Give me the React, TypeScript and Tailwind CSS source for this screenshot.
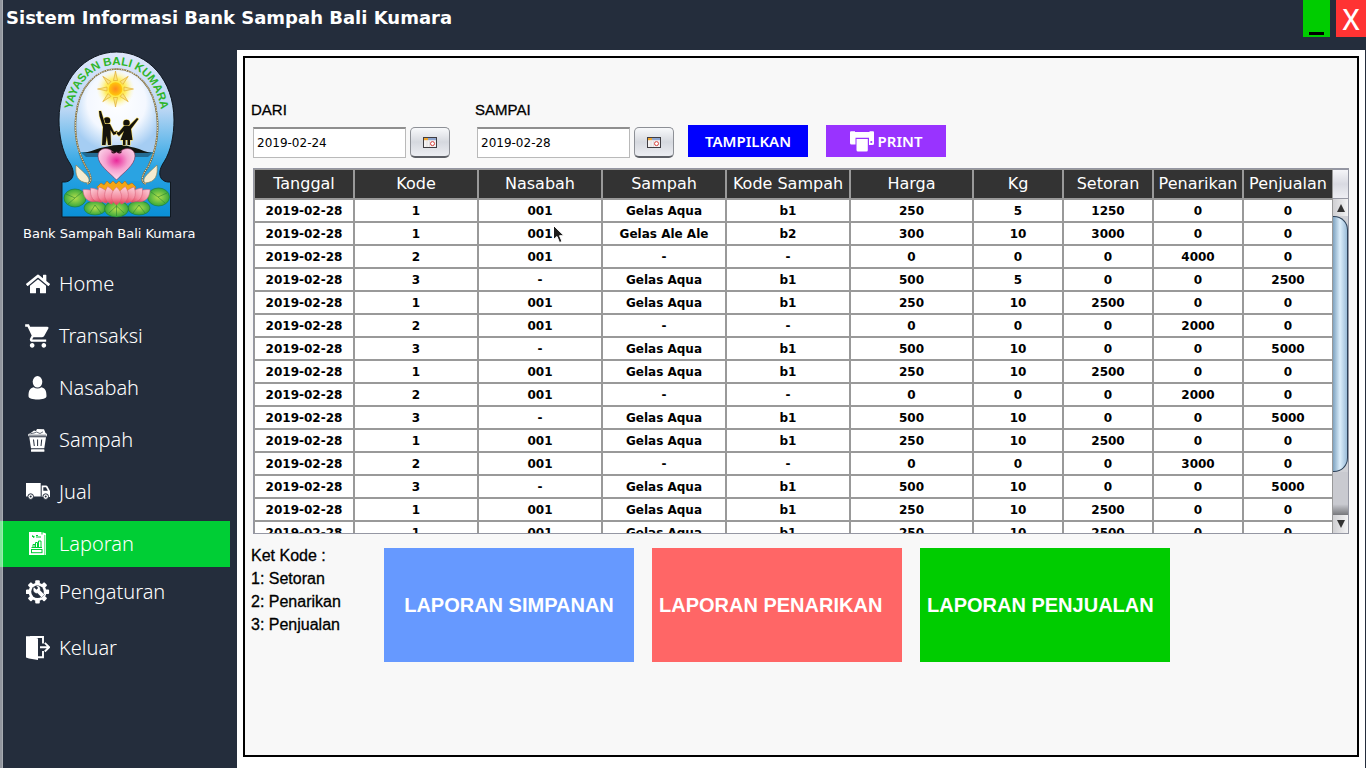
import type { ReactNode } from "react";
import { FaHome } from "react-icons/fa";
import { MdShoppingCart } from "react-icons/md";

const NAVY = "#242d3c";

function Logo() {
  const petals = [-64, -48, -32, -16, 64, 48, 32, 16, 0];
  return (
    <svg viewBox="17 5 120 170" className="h-[170px] w-[120px]" role="img" aria-label="Yayasan Bali Kumara">
      <defs>
        <linearGradient id="sky" x1="0" y1="0" x2="0" y2="1">
          <stop offset="0" stopColor="#dfe6fa" />
          <stop offset="0.35" stopColor="#b9d6f4" />
          <stop offset="0.7" stopColor="#2ba5e4" />
          <stop offset="1" stopColor="#0a8fd6" />
        </linearGradient>
        <radialGradient id="glow" cx="0.5" cy="0.4" r="0.6">
          <stop offset="0" stopColor="#ffffff" />
          <stop offset="0.6" stopColor="#f4f8ff" />
          <stop offset="1" stopColor="#a5cdf3" />
        </radialGradient>
        <radialGradient id="halo">
          <stop offset="0" stopColor="#ffd200" />
          <stop offset="0.55" stopColor="#ffee66" />
          <stop offset="1" stopColor="#fff8c0" stopOpacity="0" />
        </radialGradient>
        <radialGradient id="sun">
          <stop offset="0" stopColor="#ff8a1e" />
          <stop offset="1" stopColor="#ffc70a" />
        </radialGradient>
        <radialGradient id="heart" cx="0.5" cy="0.38" r="0.6">
          <stop offset="0" stopColor="#e9289a" />
          <stop offset="0.5" stopColor="#f6a0cf" />
          <stop offset="1" stopColor="#fbdcec" />
        </radialGradient>
        <linearGradient id="petal" x1="0" y1="0" x2="0" y2="1">
          <stop offset="0" stopColor="#fbd3dc" />
          <stop offset="0.6" stopColor="#f48a9e" />
          <stop offset="1" stopColor="#e23f55" />
        </linearGradient>
        <radialGradient id="leaf">
          <stop offset="0" stopColor="#b6e04c" />
          <stop offset="1" stopColor="#38a83c" />
        </radialGradient>
        <path id="arc" d="M31 74 C33 43 50 20 76.500 20 C103 20 120 43 122 74" />
      </defs>
      <path
        d="M22 172 V137 H25 C34 136 36 127 29 117 C22 106 19 90 19 75 C19 35 45 7 76.500 7 C108 7 134 35 134 75 C134 90 131 106 124 117 C117 127 119 136 128 137 H130.500 V172Z"
        fill="url(#sky)"
        stroke="#101820"
        strokeWidth="1"
      />
      <path d="M38 107 C30 65 45 24 76.500 24 C108 24 123 65 115 107Z" fill="url(#glow)" />
      <path d="M38 107 H115 C112 120 106 130 103 136 H50 C46 128 41 119 38 107Z" fill="#2aa3e2" />
      <path
        d="M47 139 C54 137 50 128 46 122 C37 106 34 88 36 70 C39 42 56 24 76.500 24 C97 24 114 42 117 70 C119 88 116 106 108 122 C103 128 99 137 106 139"
        fill="none"
        stroke="#75643f"
        strokeWidth="1.700"
      />
      <path
        d="M47 139 C54 137 50 128 46 122 C37 106 34 88 36 70 C39 42 56 24 76.500 24 C97 24 114 42 117 70 C119 88 116 106 108 122 C103 128 99 137 106 139"
        fill="none"
        stroke="#e8dcae"
        strokeWidth="1"
        strokeDasharray="1.500 1"
      />
      <text fontFamily="Liberation Sans, sans-serif" fontSize="11.500" fontWeight="700" fill="#2fb52a">
        <textPath href="#arc" startOffset="50%" textAnchor="middle">
          YAYASAN BALI KUMARA
        </textPath>
      </text>
      <circle cx="75.500" cy="44" r="19" fill="url(#halo)" />
      {[0, 45, 90, 135, 180, 225, 270, 315].map((a) => (
        <path key={a} d="M73.500 35.500 L75.500 26 L77.500 35.500Z" fill="#fbe27a" stroke="#d79a17" strokeWidth="0.500" transform={`rotate(${a} 75.500 44)`} />
      ))}
      <circle cx="75.500" cy="44" r="6.800" fill="url(#sun)" />
      <path d="M42 108 C52 107 56 103 68 101.500 C76 99.500 84 99.500 91 102 C99 103 104 107 112 108Z" fill="#10150f" />
      <path d="M41 107.500 H113 L108 112 H46Z" fill="#1b3344" opacity="0.500" />
      <g stroke="#f6dd6a" strokeWidth="1.200" fill="#15130c" strokeLinejoin="round" paintOrder="stroke">
        <circle cx="67" cy="75.500" r="3.200" />
        <path d="M59 66 L61 66 L65 79 H70 L74 87 L77 86 L78 88 L73.500 90 L70.500 85 L71 100 H68 L66.800 91 L65.500 100 H62 L63 82 L59.500 71Z" />
        <circle cx="86.500" cy="78" r="3.200" />
        <path d="M84 81 H89 L97 73 L98.500 74 L91 84 L92.500 95 H90 V100 H87.500 V95 H85.500 V100 H83 V95 H80.500 L84 86 L79 91 L77 89 L76.500 87.500 L79 87Z" />
      </g>
      <path
        d="M76.500 135 C70 128 58 120 58 111 C58 104 66 101 72 106 Q75 109 76.500 107 Q78 109 81 106 C87 101 95 104 95 111 C95 120 83 128 76.500 135Z"
        fill="url(#heart)"
        stroke="#7b2850"
        strokeWidth="0.600"
      />
      <path d="M71.500 106.500 Q73 109 75.500 107 M81.500 106.500 Q80 109 77.500 107" fill="none" stroke="#30101c" strokeWidth="1.200" />
      <g fill="#f5ecd0" stroke="#8f7a46" strokeWidth="0.600">
        <path d="M36 120 C35 130 37 137 48 138 C52 133 44 128 36 120Z" />
        <path d="M117 120 C118 130 116 137 105 138 C101 133 109 128 117 120Z" />
      </g>
      <g fill="url(#leaf)" stroke="#1f7a2b" strokeWidth="0.600">
        <ellipse cx="35" cy="153" rx="11" ry="9" />
        <ellipse cx="118.500" cy="152" rx="11" ry="9" />
        <ellipse cx="55" cy="163" rx="11" ry="7" />
        <ellipse cx="99" cy="163" rx="11" ry="7" />
        <ellipse cx="76.500" cy="164" rx="12" ry="8" />
      </g>
      <path
        d="M35 153 L26 149 M35 153 L28 159 M35 153 L42 147 M118 152 L127 148 M118 152 L125 158 M118 152 L111 147 M76.500 158 V171 M76.500 161 L69 168 M76.500 161 L84 168 M55 160 L50 168 M55 160 L61 168 M99 160 L93 168 M99 160 L105 168"
        stroke="#2a8532"
        strokeWidth="0.600"
      />
      <path d="M57 142 L61 138 L64 140 L67 136 L70 139 L73 136 L76 139 L79 136 L82 139 L85 136 L88 140 L92 138 L96 142 L92 150 H62Z" fill="#f4a614" stroke="#b36a10" strokeWidth="0.600" />
      {petals.map((a) => (
        <path
          key={a}
          d="M76.500 160 C69.500 155 70 148 76.500 142 C83 148 83.500 155 76.500 160Z"
          fill="url(#petal)"
          stroke="#d65f78"
          strokeWidth="0.500"
          transform={`translate(${a * 0.33} ${-Math.abs(a) * 0.05}) rotate(${a * 0.8} 76.500 158)`}
        />
      ))}
    </svg>
  );
}

function Glyph({ children }: { children: ReactNode }) {
  return (
    <svg viewBox="0 0 24 24" className="size-6" fill="currentColor" aria-hidden="true">
      {children}
    </svg>
  );
}

const PersonIcon = () => (
  <Glyph>
    <ellipse cx="11.500" cy="5.800" rx="4.800" ry="5.800" />
    <path d="M7.500 11.200 Q11.500 13.800 15.500 11.200 C19 12 20.500 14.500 20.500 20 C20.500 22.600 16 23.500 11.500 23.500 C7 23.500 2.500 22.600 2.500 20 C2.500 14.500 4 12 7.500 11.200Z" />
  </Glyph>
);

const TrashIcon = () => (
  <Glyph>
    <path d="M4 5.500 L8 2.500 L10 3 L11 1 L18 1.300 L19.500 5 L21 6 V8.300 H2.300 V6Z" />
    <path d="M4.500 5.700 L8 5 L10.500 4 L14 5.500 L17 3.800 M3 7.200 H20.500" stroke={NAVY} strokeWidth="0.700" fill="none" />
    <path d="M3.300 9.200 H20 L18.300 20.300 H5Z" />
    <rect x="5" y="21.200" width="13.400" height="2.600" rx="0.500" />
    <path d="M7.500 11.500 L8.300 18 M11.600 11.500 V18 M15.700 11.500 L15 18" stroke={NAVY} strokeWidth="1" />
  </Glyph>
);

const TruckIcon = () => (
  <Glyph>
    <path d="M0 3 H14.700 V16.500 H0Z" />
    <path d="M15.700 5.500 H20 Q21 5.500 21.600 6.500 L24 11 V17 H15.700Z" />
    <path d="M17.300 7.200 H20 L21.800 10.800 H17.300Z" fill={NAVY} />
    <g fill="#ffffff" stroke={NAVY} strokeWidth="1">
      <circle cx="4.700" cy="16.600" r="2.800" />
      <circle cx="19.700" cy="16.600" r="2.800" />
    </g>
    <circle cx="4.700" cy="16.600" r="1" fill={NAVY} />
    <circle cx="19.700" cy="16.600" r="1" fill={NAVY} />
  </Glyph>
);

const ReportIcon = () => (
  <Glyph>
    <path d="M3 0 H15.500 V2.500 H18.500 V23 H3Z" />
    <path d="M16.500 0.300 L20 1.500 V23 H19.200 V3 H16.500Z" />
    <g stroke="#00ce35" strokeWidth="1" fill="none">
      <path d="M6 4.500 H8.500 M6.500 3.200 L8 6 M10 5 H15 M10 3.500 H12" />
      <path d="M5.500 15.500 H16 M7 15 V12.500 H9 V15 M9.500 15 V10.500 H11.500 V15 M12.500 15 V9 H15 V15" />
      <rect x="5.500" y="17.500" width="10.500" height="3.200" />
    </g>
  </Glyph>
);

const GearIcon = () => (
  <Glyph>
    {[0, 45, 90, 135, 180, 225, 270, 315].map((a) => (
      <rect key={a} x="9.200" y="0.200" width="4.600" height="5" rx="1" transform={`rotate(${a} 11.500 11.800)`} />
    ))}
    <circle cx="11.500" cy="11.800" r="9" />
    <circle cx="11.500" cy="11.800" r="6.300" fill={NAVY} />
    <path
      d="M7.800 7 L10.400 9.400 L12 8 L9.900 5.700 C13 5 15 7.500 14.200 10.300 L18.500 14.500 L15.500 17.600 L11.500 13.300 C8.500 14 6 10.500 7.800 7Z"
      stroke={NAVY}
      strokeWidth="0.400"
    />
  </Glyph>
);

const ExitIcon = () => (
  <Glyph>
    <path d="M0 0.300 H4 L12 2.500 V24 L3 22.500 L0 21.500Z" />
    <path d="M4 1 H17 V7.500 M17 15 V21.300 H12" fill="none" stroke="currentColor" strokeWidth="1.900" />
    <path d="M14 11.200 H22.500 M18.800 6.900 L23.200 11.200 L18.800 15.500" fill="none" stroke="currentColor" strokeWidth="1.900" />
  </Glyph>
);

const PrinterIcon = () => (
  <svg viewBox="0 0 24 21" className="h-[21px] w-6" fill="#ffffff" aria-hidden="true">
    <path d="M1 0.300 H5 V1 H19.500 V0.300 H23 Q24 0.300 24 1.500 V12.500 Q24 14 22.500 14 H19 V6.800 H5.500 V13.500 H1.500 Q0 13.500 0 12 V1.500 Q0 0.300 1 0.300Z" />
    <path d="M6.500 8 H17.800 V19 Q17.800 20.500 16.500 20.500 H8 Q6.500 20.500 6.500 19Z" />
    <circle cx="21.300" cy="11" r="1.100" fill="#9933ff" />
  </svg>
);

const CalendarIcon = () => (
  <svg viewBox="0 0 14 11" className="h-[11px] w-3.5" aria-hidden="true">
    <rect x="0.500" y="0.500" width="13" height="10" fill="#f4f2f2" stroke="#3f3d42" />
    <rect x="1" y="1" width="4" height="2.200" fill="#f0a52e" />
    <rect x="5" y="1" width="8" height="2.200" fill="#8fa6cf" />
    <path d="M4 4 V10 M6.500 4 V10" stroke="#d5d2d4" strokeWidth="0.600" />
    <circle cx="9.500" cy="6.600" r="2" fill="#fff" stroke="#d8433e" strokeWidth="1" />
  </svg>
);

const nav = [
  { label: "Home", icon: <FaHome className="size-6" />, cls: "" },
  { label: "Transaksi", icon: <MdShoppingCart className="-m-0.5 size-7" />, cls: "mt-1.5" },
  { label: "Nasabah", icon: <PersonIcon />, cls: "mt-1.5" },
  { label: "Sampah", icon: <TrashIcon />, cls: "mt-1.5" },
  { label: "Jual", icon: <TruckIcon />, cls: "mt-1.5" },
  { label: "Laporan", icon: <ReportIcon />, cls: "mt-1.5 bg-[#00ce35]" },
  { label: "Pengaturan", icon: <GearIcon />, cls: "mt-0.5" },
  { label: "Keluar", icon: <ExitIcon />, cls: "mt-2.5" },
];

const columns = [
  { name: "Tanggal", width: "w-[101px]" },
  { name: "Kode", width: "w-[124px]" },
  { name: "Nasabah", width: "w-[124px]" },
  { name: "Sampah", width: "w-[124px]" },
  { name: "Kode Sampah", width: "w-[124px]" },
  { name: "Harga", width: "w-[123px]" },
  { name: "Kg", width: "w-[90px]" },
  { name: "Setoran", width: "w-[90px]" },
  { name: "Penarikan", width: "w-[90px]" },
  { name: "Penjualan", width: "w-[89px]" },
];

const deposit = (item: string, code: string, price: string, kg: string, total: string) => [
  "2019-02-28", "1", "001", item, code, price, kg, total, "0", "0",
];
const withdrawal = (amount: string) => ["2019-02-28", "2", "001", "-", "-", "0", "0", "0", amount, "0"];
const sale = (kg: string, total: string) => ["2019-02-28", "3", "-", "Gelas Aqua", "b1", "500", kg, "0", "0", total];

const rows = [
  deposit("Gelas Aqua", "b1", "250", "5", "1250"),
  deposit("Gelas Ale Ale", "b2", "300", "10", "3000"),
  withdrawal("4000"),
  sale("5", "2500"),
  deposit("Gelas Aqua", "b1", "250", "10", "2500"),
  withdrawal("2000"),
  sale("10", "5000"),
  deposit("Gelas Aqua", "b1", "250", "10", "2500"),
  withdrawal("2000"),
  sale("10", "5000"),
  deposit("Gelas Aqua", "b1", "250", "10", "2500"),
  withdrawal("3000"),
  sale("10", "5000"),
  deposit("Gelas Aqua", "b1", "250", "10", "2500"),
  deposit("Gelas Aqua", "b1", "250", "10", "2500"),
];

function DateField({ id, label, value }: { id: string; label: string; value: string }) {
  return (
    <div className="flex flex-col gap-[7px]">
      <label htmlFor={id} className="font-['Liberation_Sans',sans-serif] text-[15px] leading-5 text-black [-webkit-text-stroke:0.3px_black]">
        {label}
      </label>
      <div className="ml-0.5 flex gap-1">
        <input
          id={id}
          type="text"
          defaultValue={value}
          className="h-[31px] w-[153px] border border-t-2 border-[#b9b9b9] border-t-[#8f8f8f] bg-white px-[3px] font-['DejaVu_Sans',sans-serif] text-xs text-black outline-none"
        />
        <button
          type="button"
          aria-label={`Pilih tanggal ${label.toLowerCase()}`}
          className="flex h-[31px] w-10 items-center justify-center rounded-[5px] border border-b-2 border-[#8d9096] border-b-[#5d6066] bg-linear-to-b from-[#f8f9fb] via-[#d6d9df] to-[#eceef2]"
        >
          <CalendarIcon />
        </button>
      </div>
    </div>
  );
}

function ScrollBar() {
  return (
    <div className="flex w-[15px] shrink-0 flex-col bg-[#d0d1d6]" aria-hidden="true">
      <div className="h-[29px] shrink-0 border-t border-[#9597a3] bg-linear-to-b from-[#f5f5f8] via-[#d9dae2] to-[#eeeef3]" />
      <div className="flex h-[18px] shrink-0 items-center justify-center border-t border-[#9597a3] bg-linear-to-r from-[#cfcfd2] to-[#f3f3f4]">
        <svg viewBox="0 0 8 8" className="size-2" fill="#333">
          <path d="M4 0 L8 8 H0Z" />
        </svg>
      </div>
      <div className="h-64 rounded-r-[14px] border border-l-0 border-[#2b4058] bg-linear-to-r from-[#7fa3c0] via-[#dceefb] to-[#9bbcd8]" />
      <div className="flex-1 bg-linear-to-b from-[#c9cad0] from-75% to-[#77787c]" />
      <div className="flex h-[18px] shrink-0 items-center justify-center bg-linear-to-r from-[#cfcfd2] to-[#f3f3f4]">
        <svg viewBox="0 0 8 8" className="size-2" fill="#333">
          <path d="M0 0 H8 L4 8Z" />
        </svg>
      </div>
    </div>
  );
}

export default function App() {
  return (
    <div className="relative flex min-h-screen flex-col bg-[#242d3c]">
      <header className="flex h-[50px] items-start justify-between pl-1.5">
        <h1 className="pt-1.5 font-['DejaVu_Sans',sans-serif] text-lg leading-6 font-bold text-white">
          Sistem Informasi Bank Sampah Bali Kumara
        </h1>
        <div className="flex gap-1.5">
          <button type="button" aria-label="Minimize" className="flex h-[37px] w-[27px] items-end justify-center bg-[#00cc00] pb-0.5">
            <span className="h-[3px] w-[15px] bg-black" />
          </button>
          <button
            type="button"
            aria-label="Close"
            className="flex h-[37px] w-[30px] items-center justify-center bg-[#ff3333] font-['Noto_Sans',sans-serif] text-[28px] leading-8 font-medium text-white"
          >
            X
          </button>
        </div>
      </header>

      <div className="flex flex-1">
        <aside className="flex w-[237px] shrink-0 flex-col">
          <div className="flex w-[225px] flex-col items-center pl-2">
            <Logo />
          </div>
          <p className="pt-1 pl-[23px] font-['DejaVu_Sans',sans-serif] text-[13px] leading-5 text-white">
            Bank Sampah Bali Kumara
          </p>
          <nav className="mt-[17px] mr-[7px] flex flex-col">
            {nav.map((item) => (
              <a
                key={item.label}
                href="#"
                aria-current={item.label === "Laporan" ? "page" : undefined}
                className={`flex h-[46px] items-center gap-[9px] pl-[26px] font-['Noto_Sans',sans-serif] text-xl font-light text-white ${item.cls}`}
              >
                {item.icon}
                {item.label}
              </a>
            ))}
          </nav>
        </aside>

        <div className="mr-px flex min-w-0 flex-1 bg-white px-1.5 pt-1.5 pb-[11px]">
          <main className="min-w-0 flex-1 border-2 border-black bg-[#f8f8f8] pt-[42px] pr-2 pl-1.5">
            <div className="flex items-end">
              <div className="flex gap-[25px]">
                <DateField id="dari" label="DARI" value="2019-02-24" />
                <DateField id="sampai" label="SAMPAI" value="2019-02-28" />
              </div>
              <div className="mb-px ml-3.5 flex gap-[18px] font-['Noto_Sans',sans-serif] text-[15px] font-semibold text-white">
                <button type="button" className="h-8 w-[120px] bg-[#0000ff]">
                  TAMPILKAN
                </button>
                <button type="button" className="flex h-8 w-[120px] items-center justify-center gap-1 bg-[#9933ff]">
                  <PrinterIcon />
                  PRINT
                </button>
              </div>
            </div>

            <div className="relative mt-2.5 ml-0.5 flex h-[366px] overflow-hidden border border-[#9597a3]">
              <div className="min-w-0 flex-1 overflow-hidden">
                <table className="w-full table-fixed border-separate border-spacing-0 bg-white font-['DejaVu_Sans',sans-serif] text-black">
                  <thead>
                    <tr>
                      {columns.map((c) => (
                        <th
                          key={c.name}
                          scope="col"
                          className={`h-[31px] border-t border-r-2 border-b-2 border-[#999999] bg-[#333333] p-0 text-base leading-5 font-normal whitespace-nowrap text-white first:border-l last:border-r ${c.width}`}
                        >
                          {c.name}
                        </th>
                      ))}
                    </tr>
                  </thead>
                  <tbody>
                    {rows.map((row, i) => (
                      <tr key={i}>
                        {row.map((cell, j) => (
                          <td
                            key={j}
                            className="h-[23px] border-r-2 border-b-2 border-[#999999] p-0 text-center text-xs leading-5 font-bold first:border-l last:border-r"
                          >
                            {cell}
                          </td>
                        ))}
                      </tr>
                    ))}
                  </tbody>
                </table>
              </div>
              <ScrollBar />
              <svg viewBox="0 0 12 20" className="pointer-events-none absolute top-[56px] left-[299px] h-5 w-3" aria-hidden="true">
                <path d="M0.500 0.500 V14.500 L4 11.500 L6.500 17.500 L9 16.500 L6.500 10.700 H11Z" fill="#1c1c1c" stroke="#ffffff" strokeWidth="1" />
              </svg>
            </div>

            <div className="mt-2.5 flex items-start">
              <div className="w-[133px] shrink-0 font-['Liberation_Sans',sans-serif] text-base leading-[23px] text-black [-webkit-text-stroke:0.3px_black]">
                <p>Ket Kode :</p>
                <p>1: Setoran</p>
                <p>2: Penarikan</p>
                <p>3: Penjualan</p>
              </div>
              <div className="mt-1 flex gap-[18px] font-['Liberation_Sans',sans-serif] text-xl font-bold text-white">
                <button type="button" className="h-[114px] w-[250px] bg-[#6699ff]">
                  LAPORAN SIMPANAN
                </button>
                <button type="button" className="h-[114px] w-[250px] bg-[#ff6666] pl-[7px] text-left">
                  LAPORAN PENARIKAN
                </button>
                <button type="button" className="h-[114px] w-[250px] bg-[#00cc00] pl-[7px] text-left">
                  LAPORAN PENJUALAN
                </button>
              </div>
            </div>
          </main>
        </div>
      </div>
      <div className="pointer-events-none absolute inset-y-0 left-0 w-[3px] border-r border-white/20 bg-white/50" />
    </div>
  );
}
